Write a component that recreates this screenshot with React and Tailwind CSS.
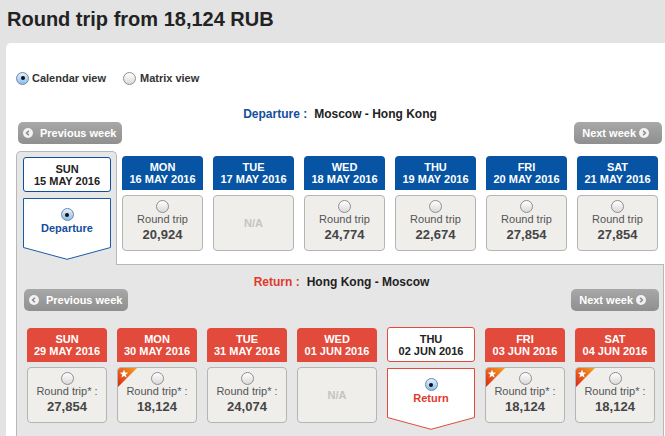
import clsx from 'clsx';

const departure = [
  { dow: 'MON', date: '16 MAY 2016', price: '20,924' },
  { dow: 'TUE', date: '17 MAY 2016' },
  { dow: 'WED', date: '18 MAY 2016', price: '24,774' },
  { dow: 'THU', date: '19 MAY 2016', price: '22,674' },
  { dow: 'FRI', date: '20 MAY 2016', price: '27,854' },
  { dow: 'SAT', date: '21 MAY 2016', price: '27,854' },
];

const returns = [
  { dow: 'SUN', date: '29 MAY 2016', price: '27,854' },
  { dow: 'MON', date: '30 MAY 2016', price: '18,124', star: true },
  { dow: 'TUE', date: '31 MAY 2016', price: '24,074' },
  { dow: 'WED', date: '01 JUN 2016' },
  { dow: 'THU', date: '02 JUN 2016', selected: true },
  { dow: 'FRI', date: '03 JUN 2016', price: '18,124', star: true },
  { dow: 'SAT', date: '04 JUN 2016', price: '18,124', star: true },
];

const Radio = ({ checked }) => (
  <span
    className={clsx(
      'inline-flex w-[13px] h-[13px] shrink-0 rounded-full border items-center justify-center',
      checked
        ? 'border-[#6b87ad] bg-linear-to-b from-[#e2f0fc] to-[#8dbde9]'
        : 'border-[#8f8f8f] bg-linear-to-b from-white to-[#d9d9d9]'
    )}
  >
    {checked && <span className="w-[4px] h-[4px] rounded-full bg-[#111]" />}
  </span>
);

const ArrowCircle = ({ dir }) => (
  <svg width="10" height="10" viewBox="0 0 10 10" className="shrink-0">
    <circle cx="5" cy="5" r="5" fill="#f2f2f2" />
    <path
      d={dir === 'left' ? 'M5.9 2.7 3.6 5l2.3 2.3' : 'M4.1 2.7 6.4 5 4.1 7.3'}
      fill="none"
      stroke="#8c8c8c"
      strokeWidth="1.6"
    />
  </svg>
);

const PrevButton = () => (
  <button className="h-[22px] pl-[5px] pr-[6px] rounded-[5px] bg-linear-to-b from-[#a8a8a8] to-[#8f8f8f] text-white font-bold text-[11px] flex items-center gap-[7px]">
    <ArrowCircle dir="left" />
    <span>Previous week</span>
  </button>
);

const NextButton = () => (
  <button className="h-[22px] pl-[8px] pr-[13px] rounded-[5px] bg-linear-to-b from-[#a8a8a8] to-[#8f8f8f] text-white font-bold text-[11px] flex items-center gap-[3px]">
    <span>Next week</span>
    <ArrowCircle dir="right" />
  </button>
);

// orange corner badge with a star
const StarBadge = () => (
  <svg width="19" height="19" viewBox="0 0 19 19" className="absolute left-0 top-0">
    <defs>
      <linearGradient id="badge" x1="1" y1="0" x2="0" y2="1">
        <stop offset="0" stopColor="#f9a01e" />
        <stop offset="1" stopColor="#d9261c" />
      </linearGradient>
    </defs>
    <polygon points="0,0 19,0 0,19" fill="url(#badge)" />
    <polygon
      points="6,1.6 7.1,4.6 10.2,4.7 7.8,6.6 8.6,9.6 6,7.9 3.4,9.6 4.2,6.6 1.8,4.7 4.9,4.6"
      fill="#fff"
    />
  </svg>
);

const Cell = ({ price, label, star }) => (
  <div className="relative h-[56px] rounded-[4px] border border-[#b4b4b4] bg-[#efeeeb] overflow-hidden flex flex-col items-center">
    {star && <StarBadge />}
    {price ? (
      <>
        <div className="pt-[4px] flex">
          <Radio />
        </div>
        <span className="text-[11px] leading-[13px] text-[#555]">{label}</span>
        <span className="mt-[1px] text-[13px] leading-[15px] font-bold text-[#454545]">{price}</span>
      </>
    ) : (
      <span className="m-auto text-[11px] font-bold text-[#c4c4c4]">N/A</span>
    )}
  </div>
);

const Day = ({ day, color, label, w }) => (
  <div className={clsx('flex flex-col mt-[1px]', w)}>
    <div className={clsx('h-[34px] rounded-t-[4px] text-white font-bold text-[11px] leading-[12px] flex flex-col items-center justify-center', color)}>
      <span>{day.dow}</span>
      <span>{day.date}</span>
    </div>
    <div className="mt-[5px]">
      <Cell price={day.price} label={label} star={day.star} />
    </div>
  </div>
);

const Selected = ({ dow, date, text, border, stroke, textColor }) => (
  <div className="flex flex-col w-[88px]">
    <div className={clsx('h-[35px] bg-white border rounded-[3px] text-[#222] font-bold text-[11px] leading-[12px] flex flex-col items-center justify-center', border)}>
      <span>{dow}</span>
      <span>{date}</span>
    </div>
    <div className="relative mt-[6px] h-[62px]">
      <svg width="88" height="62" viewBox="0 0 88 62" className="absolute inset-0">
        <polygon points="0.5,0.5 87.5,0.5 87.5,49.5 44,61.3 0.5,49.5" fill="#fff" stroke={stroke} strokeWidth="1" />
      </svg>
      <div className="relative flex flex-col items-center pt-[10px]">
        <Radio checked />
        <span className={clsx('mt-[1px] text-[11px] leading-[13px] font-bold', textColor)}>{text}</span>
      </div>
    </div>
  </div>
);

export default function App() {
  return (
    <div className="w-[665px] h-[436px] overflow-hidden bg-[#e3e3e3] font-['Liberation_Sans',Arial,sans-serif]">
      <h1 className="h-[43px] pl-[7px] pt-[8px] text-[20px] leading-[23px] font-bold text-[#222]">
        Round trip from 18,124 RUB
      </h1>

      <div className="ml-[6px] w-[680px] h-[400px] rounded-tl-[5px] bg-white pl-[10px] pt-[28px]">
        <div className="flex items-center h-[14px] text-[11px] font-bold text-[#333]">
          <label className="flex items-center gap-[3px]">
            <Radio checked />
            <span>Calendar view</span>
          </label>
          <label className="flex items-center gap-[4px] ml-[17px]">
            <Radio />
            <span>Matrix view</span>
          </label>
        </div>

        <div className="w-[648px] px-[2px] mt-[22px]">
          <div className="text-center text-[12px] leading-[14px] font-bold text-[#222]">
            <span className="text-[#134f9c]">Departure :</span>
            <span className="ml-[7px]">Moscow - Hong Kong</span>
          </div>
          <div className="flex justify-between mt-[1px]">
            <PrevButton />
            <NextButton />
          </div>
        </div>

        <div className="w-[648px] mt-[7px]">
          {/* departure row */}
          <div className="flex h-[114px]">
            <div className="w-[101px] rounded-t-[5px] border-l border-t border-r border-[#b8b8b8] bg-[#e6e6e6] pl-[6px] pt-[5px]">
              <Selected
                dow="SUN"
                date="15 MAY 2016"
                text="Departure"
                border="border-[#0b4f9f]"
                stroke="#1b5aa6"
                textColor="text-[#134f9c]"
              />
            </div>
            <div className="flex-1 border-b border-[#b8b8b8] pl-[5px] pt-[4px] flex gap-[10px] items-start">
              {departure.map((d) => (
                <Day key={d.date} day={d} color="bg-[#0654a3]" label="Round trip" w="w-[81px]" />
              ))}
            </div>
          </div>

          {/* return area */}
          <div className="h-[200px] border-l border-r border-[#b8b8b8] bg-[#e6e6e6] pl-[7px] pr-[4px] pt-[10px]">
            <div className="text-center text-[12px] leading-[14px] font-bold text-[#222]">
              <span className="text-[#e0392b]">Return :</span>
              <span className="ml-[7px]">Hong Kong - Moscow</span>
            </div>
            <div className="flex justify-between">
              <PrevButton />
              <NextButton />
            </div>
            <div className="flex items-start gap-[10px] ml-[3px] mt-[16px]">
              {returns.map((d) =>
                d.selected ? (
                  <Selected
                    key={d.date}
                    dow={d.dow}
                    date={d.date}
                    text="Return"
                    border="border-[#e04b3d]"
                    stroke="#e04b3d"
                    textColor="text-[#e0392b]"
                  />
                ) : (
                  <Day key={d.date} day={d} color="bg-[#e24a3b]" label="Round trip* :" w="w-[80px]" />
                )
              )}
            </div>
          </div>
        </div>
      </div>
    </div>
  );
}
